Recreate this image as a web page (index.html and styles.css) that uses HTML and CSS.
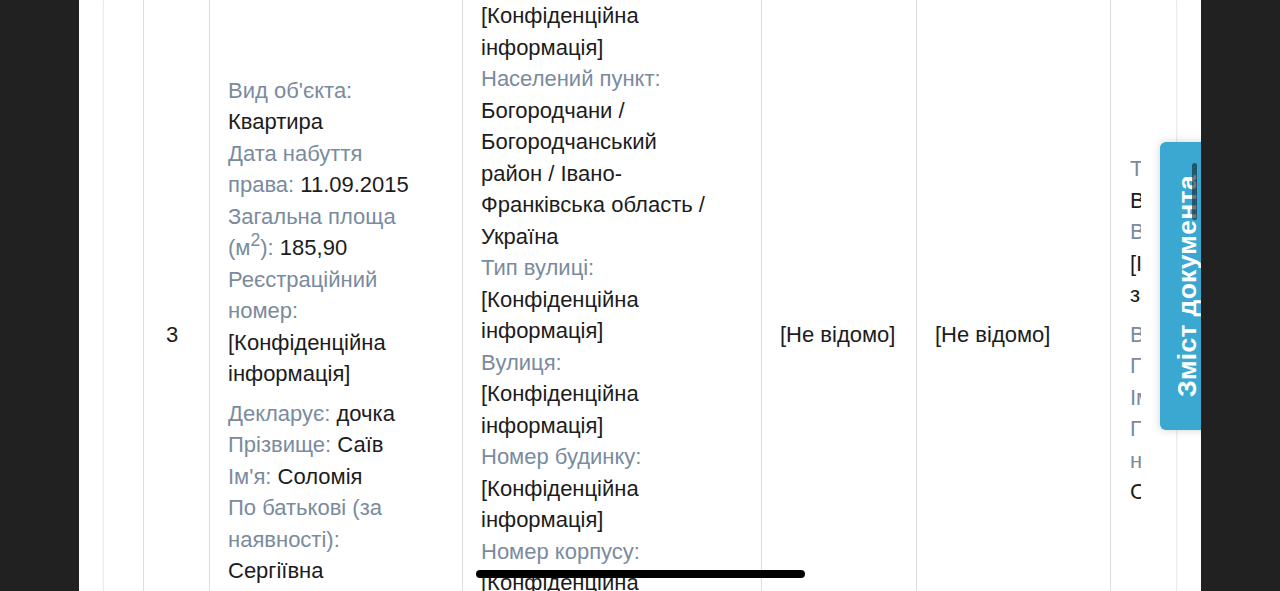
FILE: index.html
```html
<!DOCTYPE html>
<html lang="uk">
<head>
<meta charset="utf-8">
<title>Декларація</title>
<link rel="stylesheet" href="styles.css">
</head>
<body>
<div class="page">
  <div class="panel">
    <div class="table-wrap">
      <div class="grid">
        <div class="cell c-num"><span>3</span></div>
        <div class="cell c-text">
          <div class="block">
            <span class="lbl">Вид об'єкта:</span> <span class="val">Квартира</span><br>
            <span class="lbl">Дата набуття права:</span> <span class="val">11.09.2015</span><br>
            <span class="lbl">Загальна площа (м<sup>2</sup>):</span> <span class="val">185,90</span><br>
            <span class="lbl">Реєстраційний номер:</span> <span class="val">[Конфіденційна інформація]</span>
          </div>
          <div class="block">
            <span class="lbl">Декларує:</span> <span class="val">дочка</span><br>
            <span class="lbl">Прізвище:</span> <span class="val">Саїв</span><br>
            <span class="lbl">Ім'я:</span> <span class="val">Соломія</span><br>
            <span class="lbl">По батькові (за наявності):</span> <span class="val">Сергіївна</span>
          </div>
        </div>
        <div class="cell c-text c-addr">
          <div class="block">
            <span class="val">[Конфіденційна інформація]</span><br>
            <span class="lbl">Населений пункт:</span> <span class="val">Богородчани / Богородчанський район / Івано-Франківська область / Україна</span><br>
            <span class="lbl">Тип вулиці:</span> <span class="val">[Конфіденційна інформація]</span><br>
            <span class="lbl">Вулиця:</span> <span class="val">[Конфіденційна інформація]</span><br>
            <span class="lbl">Номер будинку:</span> <span class="val">[Конфіденційна інформація]</span><br>
            <span class="lbl">Номер корпусу:</span> <span class="val">[Конфіденційна інформація]</span>
          </div>
        </div>
        <div class="cell c-short"><span class="val">[Не відомо]</span></div>
        <div class="cell c-short"><span class="val">[Не відомо]</span></div>
        <div class="cell c-text c-right">
          <div class="block">
            <span class="lbl">Тип права:</span><br>
            <span class="val">Власність</span><br>
            <span class="lbl">Відсоток частки:</span><br>
            <span class="val">[Інформація</span><br>
            <span class="val">засекречена]</span>
          </div>
          <div class="block">
            <span class="lbl">Власник:</span> <span class="val">дочка</span><br>
            <span class="lbl">Прізвище:</span> <span class="val">Саїв</span><br>
            <span class="lbl">Ім'я:</span> <span class="val">Соломія</span><br>
            <span class="lbl">По батькові (за</span><br>
            <span class="lbl">наявності):</span><br>
            <span class="val">Сергіївна</span>
          </div>
        </div>
      </div>
    </div>
  </div>
  <div class="toc-tab"><span class="toc-label">Зміст документа</span></div>
  <div class="scroll-v"></div>
  <div class="scroll-h"></div>
</div>
</body>
</html>
```

FILE: styles.css
```css
* { box-sizing: border-box; }

html, body {
  margin: 0;
  padding: 0;
  height: 591px;
  overflow: hidden;
  background: #212121;
}

body {
  font-family: "Liberation Sans", Arial, Helvetica, sans-serif;
  font-size: 22px;
  line-height: 31.5px;
  color: #1c1c1c;
}

.page {
  position: relative;
  margin-left: 79px;
  width: 1122px;
  height: 591px;
  background: #ffffff;
  overflow: hidden;
  padding: 0 24px;
}

.panel {
  height: 591px;
  border-left: 1px solid #ebebeb;
  border-right: 1px solid #ebebeb;
  box-shadow: 0 0 3px rgba(0, 0, 0, 0.06);
  padding: 0 35px 0 39px;
}

.table-wrap {
  width: 998px;
  height: 591px;
  overflow: hidden;
}

.grid {
  display: grid;
  grid-template-columns: 66px 253px 299px 155px 194px 260px;
  width: max-content;
}

.cell {
  border-left: 1px solid #dedede;
  display: flex;
  flex-direction: column;
  justify-content: center;
  padding: 0 44px 0 18px;
}

.c-num {
  padding-left: 22px;
  padding-right: 0;
}

.c-short {
  padding-right: 0;
}

.c-addr {
  justify-content: flex-start;
  padding-top: 0;
  padding-bottom: 31px;
}

.c-right {
  padding-left: 19px;
}

.block {
  margin-bottom: 8px;
}

.lbl {
  color: #7a8b9e;
}

.val {
  color: #1c1c1c;
}

sup {
  line-height: 0;
  font-size: 0.8em;
  vertical-align: 0.5em;
}

.toc-tab {
  position: absolute;
  left: 1081px;
  top: 142px;
  width: 54px;
  height: 288px;
  background: #3aa8d0;
  border-radius: 6px 0 0 6px;
  box-shadow: 0 0 8px rgba(0, 0, 0, 0.18);
  display: flex;
  align-items: center;
  justify-content: center;
}

.toc-label {
  display: block;
  transform: rotate(-90deg);
  white-space: nowrap;
  color: #ffffff;
  font-weight: bold;
  font-size: 26.5px;
  line-height: 30px;
  letter-spacing: 0.3px;
}

.scroll-v {
  position: absolute;
  left: 1113px;
  top: 163px;
  width: 5px;
  height: 57px;
  border-radius: 3px;
  background: rgba(20, 30, 40, 0.6);
}

.scroll-h {
  position: absolute;
  left: 397px;
  top: 570px;
  width: 329px;
  height: 8px;
  border-radius: 4px;
  background: #000000;
}
```
